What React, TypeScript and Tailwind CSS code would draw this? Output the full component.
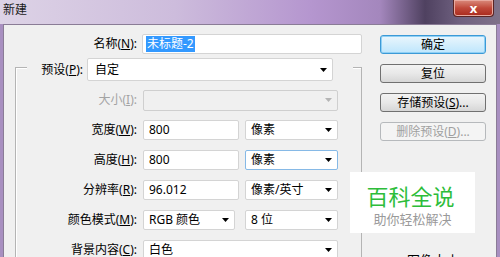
import React from "react"

function Lbl({ text, k, disabled }: { text: string; k: string; disabled?: boolean }) {
  return (
    <span className={disabled ? "text-[#a3a3a3]" : "text-black"}>
      {text}(<span className="underline">{k}</span>):
    </span>
  )
}

function Arrow({ disabled }: { disabled?: boolean }) {
  return (
    <svg width="7" height="4" viewBox="0 0 7 4" className="shrink-0">
      <polygon points="0,0 7,0 3.5,4" fill={disabled ? "#b5b5b5" : "#000"} />
    </svg>
  )
}

function Select({
  value,
  className,
  disabled,
  focus,
}: {
  value?: string
  className: string
  disabled?: boolean
  focus?: boolean
}) {
  return (
    <div
      className={`flex items-center justify-between pl-[5px] pr-[5px] border rounded-[2px] ${
        disabled ? "bg-[#f0f0f0] border-[#cfcfcf]" : "bg-white"
      } ${focus ? "border-[#86b9e6]" : disabled ? "" : "border-[#d4d4d4]"} ${className}`}
    >
      <span>{value}</span>
      <Arrow disabled={disabled} />
    </div>
  )
}

function Input({ value, className }: { value: string; className: string }) {
  return (
    <div className={`flex items-center pl-[5px] bg-white border border-[#d4d4d4] rounded-[2px] ${className}`}>
      {value}
    </div>
  )
}

function Row({ label, children }: { label: React.ReactNode; children: React.ReactNode }) {
  return (
    <div className="flex items-center h-[20px]">
      <div className="w-[123px] text-right pr-[2px]">{label}</div>
      <div className="flex items-center ml-[4px] gap-[6px]">{children}</div>
    </div>
  )
}

function Btn({ children, primary, disabled }: { children: React.ReactNode; primary?: boolean; disabled?: boolean }) {
  let cls = "border-[#707070] bg-gradient-to-b from-[#f3f3f3] via-[#e8e8e8] to-[#d6d6d6] text-black"
  if (primary)
    cls =
      "border-[#3c9ad6] bg-gradient-to-b from-[#eaf6fd] via-[#d4eefc] to-[#bee6fd] text-black shadow-[inset_0_0_0_1px_#8fd0f5]"
  if (disabled) cls = "border-[#b6b9bc] bg-[#f4f4f4] text-[#a0a0a0]"
  return (
    <div className={`h-[19px] w-[106px] flex items-center justify-center border rounded-[3px] ${cls}`}>
      {children}
    </div>
  )
}

export default function App() {
  return (
    <div className="w-[500px] h-[257px] overflow-hidden flex flex-col text-[12px] leading-none font-['Noto_Sans','Noto_Sans_CJK_SC',sans-serif] bg-[#a88fc0]">
      {/* title bar */}
      <div className="h-[24px] shrink-0 flex items-start bg-[linear-gradient(90deg,#ddd3e6_0%,#cdbcdc_35%,#b596cf_62%,#a487bd_76%,#4f4160_85%,#6f6180_92%,#7f7289_100%)]">
        <span className="ml-[3px] mt-[4px] text-[12px] text-[#1a1a1a]">新建</span>
        <div className="ml-auto mr-[6px] w-[41px] h-[17px] rounded-b-[4px] border border-t-0 border-[#5a2524] bg-gradient-to-b from-[#d98a7c] via-[#c0483a] to-[#a8281b] shadow-[inset_0_0_0_1px_#e8a99f] flex items-center justify-center text-white font-bold text-[13px]">
          x
        </div>
      </div>

      {/* body */}
      <div className="flex-1 flex pl-[3px] pr-[3px]">
        <div className="relative flex-1 bg-[#f0f0f0] border-l border-t border-r border-[#8a7c96] flex">
          {/* form column */}
          <div className="w-[360px] shrink-0 flex flex-col pt-[9px]">
            <div className="flex items-center h-[20px]">
              <div className="w-[133px] text-right">
                <Lbl text="名称" k="N" />
              </div>
              <div className="ml-[5px] w-[220px] h-[20px] bg-white border border-[#d4d4d4] rounded-[2px] flex items-center pl-[3px]">
                <span className="bg-[#3399ff] text-white px-[1px] py-[2px]">未标题-2</span>
              </div>
            </div>

            {/* group box */}
            <div className="ml-[11px] mt-[13px] w-[347px] flex-1 border-l border-t border-r border-[#b4b4b4] shadow-[inset_1px_1px_0_#fff] flex flex-col">
              <div className="-mt-[10px] ml-[11px] mr-[8px] h-[23px] bg-[#f0f0f0] flex items-center">
                <div className="w-[57px] text-right pr-[1px]">
                  <Lbl text="预设" k="P" />
                </div>
                <Select value="自定" className="ml-[3px] w-[246px] h-[23px] pl-[7px] pr-[5px]" />
              </div>

              <div className="mt-[9px] flex flex-col gap-[10px]">
                <Row label={<Lbl text="大小" k="I" disabled />}>
                  <Select disabled className="w-[195px] h-[21px]" />
                </Row>
                <Row label={<Lbl text="宽度" k="W" />}>
                  <Input value="800" className="w-[96px] h-[20px]" />
                  <Select value="像素" className="w-[93px] h-[20px]" />
                </Row>
                <Row label={<Lbl text="高度" k="H" />}>
                  <Input value="800" className="w-[96px] h-[20px]" />
                  <Select value="像素" focus className="w-[93px] h-[20px]" />
                </Row>
                <Row label={<Lbl text="分辨率" k="R" />}>
                  <Input value="96.012" className="w-[96px] h-[20px]" />
                  <Select value="像素/英寸" className="w-[93px] h-[20px]" />
                </Row>
                <Row label={<Lbl text="颜色模式" k="M" />}>
                  <Select value="RGB 颜色" className="w-[92px] h-[20px]" />
                  <Select value="8 位" className="ml-[4px] w-[93px] h-[20px]" />
                </Row>
                <Row label={<Lbl text="背景内容" k="C" />}>
                  <Select value="白色" className="w-[195px] h-[20px]" />
                </Row>
              </div>
            </div>
          </div>

          {/* button column */}
          <div className="flex flex-col pl-[16px] pt-[10px] gap-[10px]">
            <Btn primary>确定</Btn>
            <Btn>复位</Btn>
            <Btn>
              存储预设(<span className="underline">S</span>)...
            </Btn>
            <Btn disabled>
              删除预设(<span className="underline">D</span>)...
            </Btn>
            <div className="mt-[101px] ml-[27px] text-[13px] leading-[16px]">图像大小:</div>
          </div>

          {/* watermark overlay */}
          <div className="absolute left-[346px] top-[147px] w-[125px] h-[61px] bg-white flex flex-col items-center pt-[11px]">
            <span className="text-[22px] text-[#2dbd3a] leading-[26px] ml-[-4px]">百科全说</span>
            <span className="text-[13px] text-[#9a9a9a] leading-[15px] mt-[3px]">助你轻松解决</span>
          </div>
        </div>
      </div>
    </div>
  )
}
